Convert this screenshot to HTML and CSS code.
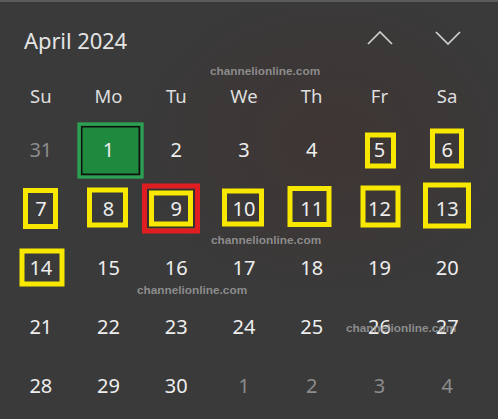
FILE: index.html
```html
<!DOCTYPE html>
<html>
<head>
<meta charset="utf-8">
<link rel="stylesheet" href="styles.css">
</head>
<body>
<div class="panel">
  <header class="head">
    <h1 class="title">April 2024</h1>
    <div class="nav">
      <button class="navbtn" aria-label="Previous month">
        <svg width="26" height="14" viewBox="0 0 26 14"><polyline points="1,13 13,1 25,13" fill="none" stroke="#d0d0d0" stroke-width="1.7"/></svg>
      </button>
      <button class="navbtn" aria-label="Next month">
        <svg width="26" height="14" viewBox="0 0 26 14"><polyline points="1,1 13,13 25,1" fill="none" stroke="#d0d0d0" stroke-width="1.7"/></svg>
      </button>
    </div>
  </header>
  <div class="weekdays">
    <span>Su</span><span>Mo</span><span>Tu</span><span>We</span><span>Th</span><span>Fr</span><span>Sa</span>
  </div>
  <div class="days">
    <div class="cell other"><span class="num">31</span></div>
    <div class="cell"><span class="today"></span><span class="num">1</span></div>
    <div class="cell"><span class="num">2</span></div>
    <div class="cell"><span class="num">3</span></div>
    <div class="cell"><span class="num">4</span></div>
    <div class="cell"><span class="mark mk5"></span><span class="num">5</span></div>
    <div class="cell"><span class="mark mk6"></span><span class="num">6</span></div>

    <div class="cell"><span class="mark mk7"></span><span class="num">7</span></div>
    <div class="cell"><span class="mark mk8"></span><span class="num">8</span></div>
    <div class="cell"><span class="mark red mk9"></span><span class="num">9</span></div>
    <div class="cell"><span class="mark mk10"></span><span class="num">10</span></div>
    <div class="cell"><span class="mark mk11"></span><span class="num">11</span></div>
    <div class="cell"><span class="mark mk12"></span><span class="num">12</span></div>
    <div class="cell"><span class="mark mk13"></span><span class="num">13</span></div>

    <div class="cell"><span class="mark mk14"></span><span class="num">14</span></div>
    <div class="cell"><span class="num">15</span></div>
    <div class="cell"><span class="num">16</span></div>
    <div class="cell"><span class="num">17</span></div>
    <div class="cell"><span class="num">18</span></div>
    <div class="cell"><span class="num">19</span></div>
    <div class="cell"><span class="num">20</span></div>

    <div class="cell"><span class="num">21</span></div>
    <div class="cell"><span class="num">22</span></div>
    <div class="cell"><span class="num">23</span></div>
    <div class="cell"><span class="num">24</span></div>
    <div class="cell"><span class="num">25</span></div>
    <div class="cell"><span class="num">26</span></div>
    <div class="cell"><span class="num">27</span></div>

    <div class="cell"><span class="num">28</span></div>
    <div class="cell"><span class="num">29</span></div>
    <div class="cell"><span class="num">30</span></div>
    <div class="cell other"><span class="num">1</span></div>
    <div class="cell other"><span class="num">2</span></div>
    <div class="cell other"><span class="num">3</span></div>
    <div class="cell other"><span class="num">4</span></div>
  </div>
  <span class="wm wm1">channelionline.com</span>
  <span class="wm wm2">channelionline.com</span>
  <span class="wm wm3">channelionline.com</span>
  <span class="wm wm4">channelionline.com</span>
</div>
</body>
</html>
```
FILE: styles.css
```css
html, body {
  margin: 0;
  padding: 0;
  background: #3a3a3a;
}
body {
  width: 498px;
  height: 419px;
  overflow: hidden;
}
.panel {
  position: relative;
  box-sizing: border-box;
  width: 498px;
  height: 419px;
  border-top: 2px solid #5b5b5b;
  background:
    radial-gradient(ellipse 200px 160px at 330px 140px, rgba(70, 45, 40, 0.35), rgba(70, 45, 40, 0) 100%),
    #3a3a3a;
  font-family: "Noto Sans", "Open Sans", sans-serif;
  color: #ececec;
}
.head {
  height: 76px;
  display: flex;
  align-items: center;
  justify-content: space-between;
  padding: 0 16px 0 24px;
}
.title {
  margin: 0;
  font-size: 22px;
  font-weight: 400;
  color: #e4e4e4;
  letter-spacing: -0.1px;
}
.nav {
  display: flex;
  margin-top: -4px;
}
.navbtn {
  width: 68px;
  height: 40px;
  padding: 0;
  border: 0;
  background: transparent;
  display: flex;
  align-items: center;
  justify-content: center;
}
.weekdays {
  display: grid;
  grid-template-columns: repeat(7, 1fr);
  padding: 0 17px 0 7px;
  height: 34px;
  margin-bottom: 8px;
  align-items: center;
  justify-items: center;
  font-size: 18.5px;
  color: #dedede;
}
.days {
  display: grid;
  grid-template-columns: repeat(7, 1fr);
  grid-auto-rows: 59px;
  padding: 0 17px 0 7px;
}
.cell {
  display: grid;
  place-items: center;
}
.cell > * {
  grid-area: 1 / 1;
}
.num {
  position: relative;
  font-size: 20px;
  line-height: 1;
  color: #eeeeee;
}
.other .num {
  color: #8c8c8c;
}
.today {
  box-sizing: border-box;
  width: 66px;
  height: 56px;
  border: 3px solid #2f9e55;
  box-shadow: inset 0 0 0 2px #101010;
  background: #1d8a3e;
  transform: translate(1.5px, 0.5px);
}
.mark {
  box-sizing: border-box;
  border: 5px solid #f8e800;
}
.mark.red {
  border: 5px solid #e01e22;
  box-shadow: inset 0 0 0 2px #33302e, inset 0 0 0 7px #f8e800;
}
.mk5 { width: 31px; height: 36px; transform: translate(1px, 0.5px); }
.mk6 { width: 34px; height: 40px; transform: translate(0, -1.5px); }
.mk7 { width: 35px; height: 41px; transform: translate(0, 0); }
.mk8 { width: 41px; height: 40px; transform: translate(-1px, -1.5px); }
.mk9 { width: 58px; height: 50px; transform: translate(-5px, -0.5px); }
.mk10 { width: 42px; height: 38px; transform: translate(-1px, -1.5px); }
.mk11 { width: 44px; height: 41px; transform: translate(-2.5px, -2px); }
.mk12 { width: 40px; height: 42px; transform: translate(1.5px, -2.5px); }
.mk13 { width: 48px; height: 46px; transform: translate(0, -3.5px); }
.mk14 { width: 45px; height: 38px; transform: translate(1.5px, -0.5px); }
.wm {
  position: absolute;
  font-family: "Liberation Sans", Arial, sans-serif;
  font-weight: 700;
  font-size: 11.8px;
  line-height: 1;
  color: rgba(165, 165, 165, 0.78);
  white-space: nowrap;
}
.wm1 { left: 210px; top: 64px; }
.wm2 { left: 211px; top: 233px; }
.wm3 { left: 137px; top: 283px; }
.wm4 { left: 346px; top: 321px; }
```
